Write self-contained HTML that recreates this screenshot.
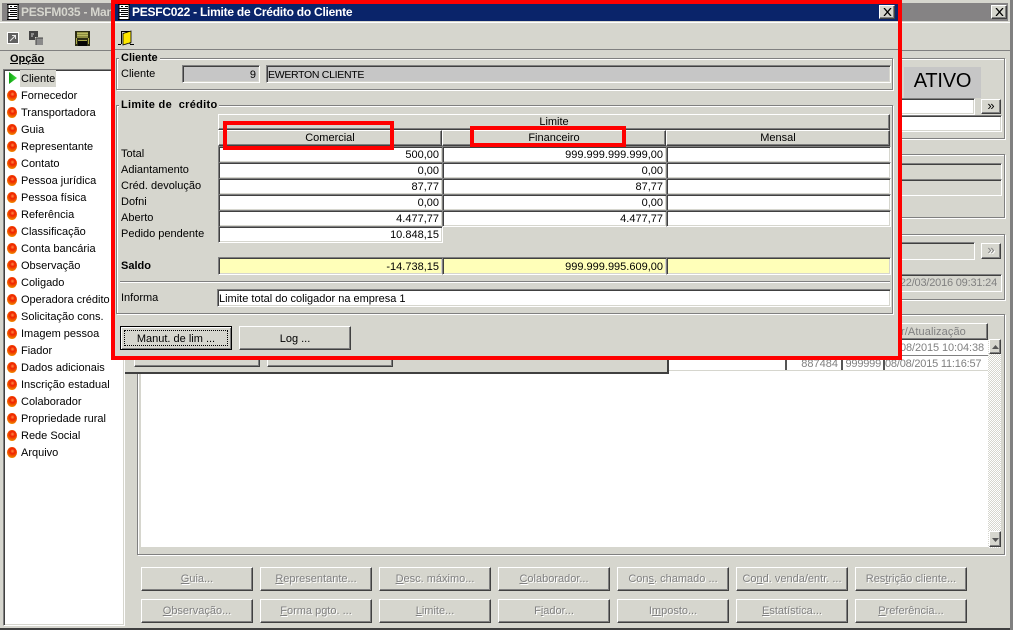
<!DOCTYPE html>
<html><head><meta charset="utf-8"><style>
html,body{margin:0;padding:0}
body{width:1013px;height:630px;position:relative;overflow:hidden;background:#d6d6ce;font:11px "Liberation Sans",sans-serif;color:#000}
div,span{position:absolute;box-sizing:border-box}
svg{position:absolute;display:block}
.t{white-space:nowrap;line-height:13px;height:13px}
.r{text-align:right}.c{text-align:center}
.tb{font:bold 12px "Liberation Sans",sans-serif;line-height:14px;white-space:nowrap;letter-spacing:-.25px}
.in{background:#fff;border-top:1px solid #808080;border-left:1px solid #808080;border-right:1px solid #fff;border-bottom:1px solid #fff;box-shadow:inset 1px 1px 0 #404040,inset -1px -1px 0 #d6d6ce}
.g{background:#c6c6c6}.y{background:#ffffb9}.d{background:#d6d6ce}
.b{background:#d6d6ce;border-top:1px solid #fff;border-left:1px solid #fff;border-right:1px solid #404040;border-bottom:1px solid #404040;box-shadow:inset -1px -1px 0 #808080}
.gp{border:1px solid #808080;box-shadow:1px 1px 0 #fff,inset 1px 1px 0 #fff}
.lb{font-weight:bold;background:#d6d6ce;padding:0 2px;line-height:13px;white-space:nowrap}
.dis{color:#808080;text-shadow:1px 1px 0 #fff;text-align:center;line-height:22px;white-space:nowrap}
.o{left:7px;width:10px;height:11px;border-radius:50%;background:radial-gradient(circle at 55% 38%,#ff9040 0,#f02000 28%,#f06000 58%,#f09000 78%,#a09488 100%)}
.rd{border:4px solid #f00}
</style></head><body>

<!-- base window -->
<div style="left:0;top:628px;width:1013px;height:2px;background:#404040"></div>
<div style="left:1010px;top:0;width:3px;height:630px;background:#808080"></div>
<div style="left:2px;top:3px;width:1006px;height:18px;background:#858384"></div>
<div class="tb" style="left:21px;top:5px;color:#d6d6ce">PESFM035 - Man</div>
<svg style="left:7px;top:4px" width="12" height="16" viewBox="0 0 12 16"><rect x="1" y="0" width="10" height="16" fill="#fff"/><path d="M0 .5h12M0 15.500h12M1 0v16M11 0v16M3 2.500h2M7 2.500h3M1 4.500h9M3 6.500h7M1 8.500h9M3 10.500h7M1 12.500h9" stroke="#000" fill="none"/></svg>
<div style="left:0;top:22px;width:1010px;height:1px;background:#fff"></div>
<div style="left:0;top:50px;width:1010px;height:1px;background:#808080"></div>
<div class="b" style="left:991px;top:5px;width:16px;height:14px"><svg style="left:3px;top:2px" width="9" height="8" viewBox="0 0 9 8"><path d="M1 0l7 8M8 0L1 8" stroke="#000" stroke-width="1.300"/></svg></div>

<!-- toolbar icons -->
<svg style="left:7px;top:32px" width="12" height="12" viewBox="0 0 12 12"><rect width="12" height="12" fill="#fff"/><rect x="1" y="1" width="10" height="10" fill="#606060"/><path d="M3 9l5-5M5 3.500h3.500V7" stroke="#e8e8e8" fill="none"/></svg>
<svg style="left:28px;top:30px" width="15" height="15" viewBox="0 0 15 15"><path d="M1 10V1h9v6H7v3z" fill="#444"/><path d="M3 3h3v2H5v2H3z" fill="#8a8a8a"/><rect x="8" y="8" width="7" height="7" fill="#8a8a8a"/><path d="M8 8h7M8 8v7" stroke="#444" fill="none"/></svg>
<svg style="left:75px;top:31px" width="15" height="15" viewBox="0 0 15 15"><rect width="15" height="15" fill="#2c2c14"/><rect x="2" y="1" width="11" height="6" fill="#8c8c40"/><rect x="2" y="2" width="11" height="1" fill="#b8b860"/><rect x="2" y="4" width="11" height="1" fill="#b8b860"/><rect x="3" y="9" width="9" height="1" fill="#a8a848"/><rect x="3" y="10" width="9" height="5" fill="#050505"/><rect x="1" y="7" width="1" height="6" fill="#a8a848"/><rect x="13" y="7" width="1" height="6" fill="#a8a848"/></svg>
<div class="t" style="left:10px;top:53px;font-weight:bold"><u>Opção</u></div>

<!-- list -->
<div class="in" style="left:3px;top:69px;width:122px;height:557px"></div>
<div style="left:20px;top:70px;width:36px;height:17px;background:#d6d6ce"></div>
<svg style="left:8px;top:71px" width="10" height="14" viewBox="0 0 10 14"><defs><linearGradient id="gr" x1="0" x2="1" y1="0" y2="0"><stop offset="0" stop-color="#10a010"/><stop offset="1" stop-color="#40e040"/></linearGradient></defs><path d="M1 1l8 6-8 6z" fill="url(#gr)"/></svg>
<div class="t" style="left:21px;top:73px">Cliente</div>
<div class="o" style="top:90px"></div><div class="t" style="left:21px;top:90px">Fornecedor</div>
<div class="o" style="top:107px"></div><div class="t" style="left:21px;top:107px">Transportadora</div>
<div class="o" style="top:124px"></div><div class="t" style="left:21px;top:124px">Guia</div>
<div class="o" style="top:141px"></div><div class="t" style="left:21px;top:141px">Representante</div>
<div class="o" style="top:158px"></div><div class="t" style="left:21px;top:158px">Contato</div>
<div class="o" style="top:175px"></div><div class="t" style="left:21px;top:175px">Pessoa jurídica</div>
<div class="o" style="top:192px"></div><div class="t" style="left:21px;top:192px">Pessoa física</div>
<div class="o" style="top:209px"></div><div class="t" style="left:21px;top:209px">Referência</div>
<div class="o" style="top:226px"></div><div class="t" style="left:21px;top:226px">Classificação</div>
<div class="o" style="top:243px"></div><div class="t" style="left:21px;top:243px">Conta bancária</div>
<div class="o" style="top:260px"></div><div class="t" style="left:21px;top:260px">Observação</div>
<div class="o" style="top:277px"></div><div class="t" style="left:21px;top:277px">Coligado</div>
<div class="o" style="top:294px"></div><div class="t" style="left:21px;top:294px">Operadora crédito</div>
<div class="o" style="top:311px"></div><div class="t" style="left:21px;top:311px">Solicitação cons.</div>
<div class="o" style="top:328px"></div><div class="t" style="left:21px;top:328px">Imagem pessoa</div>
<div class="o" style="top:345px"></div><div class="t" style="left:21px;top:345px">Fiador</div>
<div class="o" style="top:362px"></div><div class="t" style="left:21px;top:362px">Dados adicionais</div>
<div class="o" style="top:379px"></div><div class="t" style="left:21px;top:379px">Inscrição estadual</div>
<div class="o" style="top:396px"></div><div class="t" style="left:21px;top:396px">Colaborador</div>
<div class="o" style="top:413px"></div><div class="t" style="left:21px;top:413px">Propriedade rural</div>
<div class="o" style="top:430px"></div><div class="t" style="left:21px;top:430px">Rede Social</div>
<div class="o" style="top:447px"></div><div class="t" style="left:21px;top:447px">Arquivo</div>

<!-- right groups of base -->
<div class="gp" style="left:880px;top:58px;width:125px;height:81px"></div>
<div class="g c" style="left:904px;top:67px;width:77px;height:31px;font-size:20px;line-height:28px;letter-spacing:-.2px">ATIVO</div>
<div class="in" style="left:880px;top:98px;width:95px;height:17px"></div>
<div class="b c" style="left:981px;top:99px;width:20px;height:15px;line-height:11px;font-size:13px">»</div>
<div class="in" style="left:880px;top:115px;width:122px;height:17px"></div>
<div class="gp" style="left:880px;top:154px;width:125px;height:64px"></div>
<div class="in d" style="left:880px;top:163px;width:122px;height:17px"></div>
<div class="in d" style="left:880px;top:179px;width:122px;height:17px"></div>
<div class="gp" style="left:880px;top:234px;width:125px;height:66px"></div>
<div class="in d" style="left:880px;top:242px;width:95px;height:18px"></div>
<div class="b dis" style="left:981px;top:243px;width:20px;height:16px;line-height:12px;font-size:13px">»</div>
<div class="in d" style="left:880px;top:274px;width:122px;height:18px"></div>
<div class="t r" style="left:880px;top:277px;width:117px;color:#808080;letter-spacing:-.2px">22/03/2016 09:31:24</div>

<!-- tab area -->
<div class="gp" style="left:137px;top:314px;width:868px;height:241px"></div>
<div style="left:141px;top:370px;width:848px;height:177px;background:#fff"></div>
<div style="left:125px;top:359px;width:544px;height:15px;border-right:2px solid #404040;border-bottom:2px solid #404040;background:#d6d6ce"></div>
<div class="b" style="left:134px;top:358px;width:126px;height:9px"></div>
<div class="b" style="left:267px;top:358px;width:126px;height:9px"></div>
<div style="left:669px;top:340px;width:320px;height:30px;background:#fff"></div>
<div class="b t" style="left:880px;top:323px;width:108px;height:17px;line-height:17px;color:#808080;padding-left:20px;letter-spacing:.1px;overflow:hidden">r/Atualização</div>
<div style="left:785px;top:355px;width:2px;height:15px;background:#555"></div>
<div style="left:841px;top:355px;width:2px;height:15px;background:#555"></div>
<div style="left:883px;top:355px;width:2px;height:15px;background:#555"></div>
<div style="left:669px;top:355px;width:320px;height:1px;background:#808080"></div>
<div style="left:669px;top:370px;width:320px;height:1px;background:#d6d6ce"></div>
<div class="t r" style="left:880px;top:342px;width:104px;color:#808080;letter-spacing:-.1px">08/2015 10:04:38</div>
<div class="t r" style="left:787px;top:358px;width:51px;color:#808080">887484</div>
<div class="t r" style="left:843px;top:358px;width:38px;color:#808080;letter-spacing:-.2px">999999</div>
<div class="t" style="left:885px;top:358px;color:#808080;letter-spacing:-.2px">08/08/2015 11:16:57</div>
<div style="left:988px;top:339px;width:13px;height:209px;background:repeating-conic-gradient(#fff 0 25%,#d6d6ce 0 50%) 0 0/2px 2px"></div>
<div class="b" style="left:989px;top:339px;width:12px;height:15px"><svg style="left:2px;top:5px" width="7" height="4"><path d="M3.500 0L7 4H0z" fill="#555"/></svg></div>
<div class="b" style="left:989px;top:531px;width:12px;height:16px"><svg style="left:2px;top:6px" width="7" height="4"><path d="M0 0h7L3.500 4z" fill="#555"/></svg></div>

<!-- bottom buttons -->
<div class="b dis" style="left:141px;top:567px;width:112px;height:24px"><u>G</u>uia...</div>
<div class="b dis" style="left:260px;top:567px;width:112px;height:24px"><u>R</u>epresentante...</div>
<div class="b dis" style="left:379px;top:567px;width:112px;height:24px"><u>D</u>esc. máximo...</div>
<div class="b dis" style="left:498px;top:567px;width:112px;height:24px"><u>C</u>olaborador...</div>
<div class="b dis" style="left:617px;top:567px;width:112px;height:24px">Con<u>s</u>. chamado ...</div>
<div class="b dis" style="left:736px;top:567px;width:112px;height:24px">Co<u>n</u>d. venda/entr. ...</div>
<div class="b dis" style="left:855px;top:567px;width:112px;height:24px">Res<u>t</u>rição cliente...</div>
<div class="b dis" style="left:141px;top:599px;width:112px;height:24px"><u>O</u>bservação...</div>
<div class="b dis" style="left:260px;top:599px;width:112px;height:24px"><u>F</u>orma pgto. ...</div>
<div class="b dis" style="left:379px;top:599px;width:112px;height:24px"><u>L</u>imite...</div>
<div class="b dis" style="left:498px;top:599px;width:112px;height:24px">F<u>i</u>ador...</div>
<div class="b dis" style="left:617px;top:599px;width:112px;height:24px">I<u>m</u>posto...</div>
<div class="b dis" style="left:736px;top:599px;width:112px;height:24px"><u>E</u>statística...</div>
<div class="b dis" style="left:855px;top:599px;width:112px;height:24px"><u>P</u>referência...</div>

<!-- dialog -->
<div class="rd" style="left:111px;top:0;width:791px;height:360px;background:#d6d6ce"></div>
<div style="left:115px;top:4px;width:783px;height:17px;background:#0a246a"></div>
<div style="left:115px;top:22px;width:783px;height:1px;background:#fff"></div>
<div class="tb" style="left:132px;top:5px;color:#fff">PESFC022 - Limite de Crédito do Cliente</div>
<svg style="left:118px;top:4px" width="12" height="16" viewBox="0 0 12 16"><rect x="1" y="0" width="10" height="16" fill="#fff"/><path d="M0 .5h12M0 15.500h12M1 0v16M11 0v16M3 2.500h2M7 2.500h3M1 4.500h9M3 6.500h7M1 8.500h9M3 10.500h7M1 12.500h9" stroke="#000" fill="none"/></svg>
<div class="b" style="left:879px;top:5px;width:16px;height:14px"><svg style="left:3px;top:2px" width="9" height="8" viewBox="0 0 9 8"><path d="M1 0l7 8M8 0L1 8" stroke="#000" stroke-width="1.300"/></svg></div>
<div style="left:115px;top:49px;width:783px;height:1px;background:#808080"></div>
<svg style="left:118px;top:30px" width="16" height="16" viewBox="0 0 16 16"><path d="M3.500 14V1.500h8.500V14" fill="none" stroke="#000"/><path d="M5 3.500l8-2.500v11.500l-8 2.500z" fill="#ffe800" stroke="#000" stroke-width=".8"/><path d="M0 14.500h3M12 14.500h4" stroke="#000"/></svg>

<!-- Cliente group -->
<div class="gp" style="left:116px;top:58px;width:777px;height:32px"></div>
<div class="lb" style="left:119px;top:52px">Cliente</div>
<div class="t" style="left:121px;top:68px">Cliente</div>
<div class="in g t r" style="left:182px;top:65px;width:78px;height:18px;line-height:18px;padding-right:3px">9</div>
<div class="in g t" style="left:266px;top:65px;width:625px;height:18px;line-height:18px;padding-left:1px;font-size:10.500px;letter-spacing:-.3px">EWERTON CLIENTE</div>

<!-- Limite group -->
<div class="gp" style="left:116px;top:105px;width:777px;height:209px"></div>
<div class="lb" style="left:119px;top:99px;letter-spacing:.3px">Limite de&nbsp; crédito</div>

<div class="b c" style="left:218px;top:114px;width:672px;height:16px;line-height:14px">Limite</div>
<div class="b c" style="left:218px;top:130px;width:224px;height:16px;line-height:14px">Comercial</div>
<div class="b c" style="left:442px;top:130px;width:224px;height:16px;line-height:14px">Financeiro</div>
<div class="b c" style="left:666px;top:130px;width:224px;height:16px;line-height:14px">Mensal</div>

<div class="t" style="left:121px;top:148px">Total</div>
<div class="t" style="left:121px;top:164px">Adiantamento</div>
<div class="t" style="left:121px;top:180px">Créd. devolução</div>
<div class="t" style="left:121px;top:196px">Dofni</div>
<div class="t" style="left:121px;top:212px">Aberto</div>
<div class="t" style="left:121px;top:228px">Pedido pendente</div>

<div class="in t r" style="left:218px;top:146px;width:225px;height:17px;line-height:17px;padding-right:3px">500,00</div>
<div class="in t r" style="left:442px;top:146px;width:225px;height:17px;line-height:17px;padding-right:3px">999.999.999.999,00</div>
<div class="in" style="left:666px;top:146px;width:225px;height:17px"></div>
<div class="in t r" style="left:218px;top:162px;width:225px;height:17px;line-height:17px;padding-right:3px">0,00</div>
<div class="in t r" style="left:442px;top:162px;width:225px;height:17px;line-height:17px;padding-right:3px">0,00</div>
<div class="in" style="left:666px;top:162px;width:225px;height:17px"></div>
<div class="in t r" style="left:218px;top:178px;width:225px;height:17px;line-height:17px;padding-right:3px">87,77</div>
<div class="in t r" style="left:442px;top:178px;width:225px;height:17px;line-height:17px;padding-right:3px">87,77</div>
<div class="in" style="left:666px;top:178px;width:225px;height:17px"></div>
<div class="in t r" style="left:218px;top:194px;width:225px;height:17px;line-height:17px;padding-right:3px">0,00</div>
<div class="in t r" style="left:442px;top:194px;width:225px;height:17px;line-height:17px;padding-right:3px">0,00</div>
<div class="in" style="left:666px;top:194px;width:225px;height:17px"></div>
<div class="in t r" style="left:218px;top:210px;width:225px;height:17px;line-height:17px;padding-right:3px">4.477,77</div>
<div class="in t r" style="left:442px;top:210px;width:225px;height:17px;line-height:17px;padding-right:3px">4.477,77</div>
<div class="in" style="left:666px;top:210px;width:225px;height:17px"></div>
<div class="in t r" style="left:218px;top:226px;width:225px;height:17px;line-height:17px;padding-right:3px">10.848,15</div>

<div class="t" style="left:121px;top:260px;font-weight:bold">Saldo</div>
<div class="in y t r" style="left:218px;top:257px;width:225px;height:18px;line-height:19px;padding-right:3px">-14.738,15</div>
<div class="in y t r" style="left:442px;top:257px;width:225px;height:18px;line-height:19px;padding-right:3px">999.999.995.609,00</div>
<div class="in y" style="left:666px;top:257px;width:225px;height:18px"></div>

<div style="left:120px;top:281px;width:770px;height:1px;background:#808080"></div>
<div style="left:120px;top:282px;width:770px;height:1px;background:#fff"></div>
<div class="t" style="left:121px;top:292px">Informa</div>
<div class="in t" style="left:217px;top:289px;width:674px;height:18px;line-height:18px;padding-left:1px">Limite total do coligador na empresa 1</div>

<div class="b c" style="left:120px;top:326px;width:112px;height:24px;line-height:24px;border:1px solid #000;box-shadow:inset 1px 1px 0 #fff,inset -1px -1px 0 #808080">Manut. de lim ...<div style="left:3px;top:3px;right:3px;bottom:3px;border:1px dotted #000"></div></div>
<div class="b c" style="left:239px;top:326px;width:112px;height:24px;line-height:24px">Log ...</div>

<!-- red highlights -->
<div class="rd" style="left:223px;top:121px;width:171px;height:29px"></div>
<div class="rd" style="left:470px;top:126px;width:156px;height:21px"></div>
</body></html>
